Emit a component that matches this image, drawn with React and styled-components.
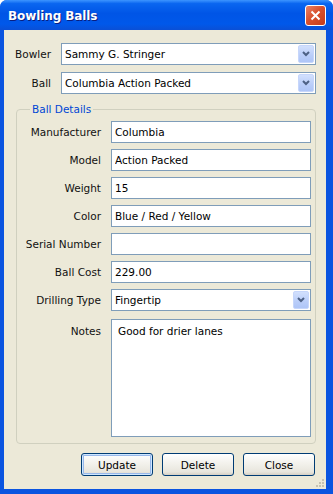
import { Fragment } from "react";
import styled, { createGlobalStyle } from "styled-components";

const GlobalStyle = createGlobalStyle`
  html, body {
    margin: 0;
    padding: 0;
    background: #ffffff;
  }
  body {
    font-family: "DejaVu Sans", Verdana, sans-serif;
    font-size: 10.5px;
  }
`;

const Window = styled.div`
  width: 333px;
  height: 494px;
  display: flex;
  flex-direction: column;
  background: #0a54e0;
  border-radius: 7px 7px 0 0;
  overflow: hidden;
  box-sizing: border-box;
`;

const TitleBar = styled.div`
  height: 30px;
  flex: none;
  display: flex;
  align-items: center;
  justify-content: space-between;
  padding: 0 7px 0 8px;
  background: linear-gradient(
    to bottom,
    #3d95ff 0%,
    #0a66f0 12%,
    #0055e6 45%,
    #0058ea 80%,
    #0a4fd6 100%
  );
`;

const Title = styled.span`
  color: #ffffff;
  font-weight: bold;
  font-size: 12px;
  letter-spacing: -0.1px;
  text-shadow: 1px 1px 0 #0a1e80;
  margin-top: 1px;
`;

const CloseButton = styled.div`
  width: 19px;
  height: 19px;
  border: 1px solid #ffffff;
  border-radius: 3px;
  background: linear-gradient(135deg, #e8836a 0%, #d9512e 45%, #c43b1a 100%);
  display: flex;
  align-items: center;
  justify-content: center;
  margin-top: 1px;
`;

const Client = styled.div`
  flex: 1;
  margin: 0 7px 5px 4px;
  background: #ece9d8;
  display: flex;
  flex-direction: column;
  position: relative;
`;

const TopGrid = styled.div`
  display: grid;
  grid-template-columns: 37px 1fr;
  column-gap: 10px;
  row-gap: 7px;
  padding: 13px 10px 0 10px;
  align-items: center;
`;

const Label = styled.label`
  text-align: right;
  color: #111;
  white-space: nowrap;
`;

const Combo = styled.div`
  height: 22px;
  box-sizing: border-box;
  border: 1px solid #7f9db9;
  background: #fff;
  display: flex;
  align-items: center;
  padding-left: 3px;
  color: #000;
`;

const ComboText = styled.span`
  flex: 1;
  white-space: nowrap;
  overflow: hidden;
`;

const ArrowButton = styled.div`
  width: 16px;
  height: 18px;
  margin-right: 1px;
  border-radius: 2px;
  background: linear-gradient(to bottom, #d2e0fd 0%, #b9cdf9 60%, #aec5f7 100%);
  border: 1px solid #c6d6fb;
  box-sizing: border-box;
  display: flex;
  align-items: center;
  justify-content: center;
`;

const Group = styled.fieldset`
  margin: 9px 10px 0 12px;
  padding: 5px 4px 6px 8px;
  border: 1px solid #d0d0bf;
  border-radius: 4px;
  min-width: 0;
`;

const Legend = styled.legend`
  color: #0046d5;
  padding: 0 2px;
  margin-left: 5px;
  line-height: 13px;
`;

const FieldGrid = styled.div`
  display: grid;
  grid-template-columns: 76px 1fr;
  column-gap: 10px;
  row-gap: 6px;
  align-items: center;
`;

const TextBox = styled.input`
  height: 22px;
  box-sizing: border-box;
  border: 1px solid #7f9db9;
  background: #fff;
  padding: 0 3px;
  margin: 0;
  font: inherit;
  color: #000;
  outline: none;
  width: 100%;
`;

const NotesLabel = styled(Label)`
  align-self: start;
  padding-top: 6px;
  margin-top: 2px;
`;

const Notes = styled.textarea`
  height: 118px;
  margin: 2px 0 0;
  box-sizing: border-box;
  border: 1px solid #7f9db9;
  background: #fff;
  padding: 5px 6px;
  font: inherit;
  color: #000;
  resize: none;
  outline: none;
  width: 100%;
  display: block;
`;

const ButtonRow = styled.div`
  display: flex;
  justify-content: flex-end;
  gap: 9px;
  padding: 9px 11px 0 0;
`;

const Button = styled.div`
  width: 72px;
  height: 23px;
  box-sizing: border-box;
  border: 1px solid #003c74;
  border-radius: 3px;
  background: linear-gradient(to bottom, #ffffff 0%, #f4f3ee 40%, #e8e6dd 85%, #d6d0c5 100%);
  display: flex;
  align-items: center;
  justify-content: center;
  color: #000;
  box-shadow: ${(p) =>
    p.$default ? "inset 0 0 0 1px #cee7ff, inset 0 0 0 2px #98b8ea" : "none"};
`;

const Grip = styled.svg`
  position: absolute;
  right: 1px;
  bottom: 1px;
`;

const Chevron = () => (
  <svg width="8" height="6" viewBox="0 0 8 6">
    <path d="M1 1 L4 4 L7 1" fill="none" stroke="#4d6185" strokeWidth="2" />
  </svg>
);

const Select = ({ value }) => (
  <Combo>
    <ComboText>{value}</ComboText>
    <ArrowButton>
      <Chevron />
    </ArrowButton>
  </Combo>
);

const fields = [
  ["Manufacturer", "Columbia"],
  ["Model", "Action Packed"],
  ["Weight", "15"],
  ["Color", "Blue / Red / Yellow"],
  ["Serial Number", ""],
  ["Ball Cost", "229.00"],
];

const gripDots = [
  [7, 1],
  [4, 4],
  [7, 4],
  [1, 7],
  [4, 7],
  [7, 7],
];

export default function App() {
  return (
    <>
      <GlobalStyle />
      <Window>
        <TitleBar>
          <Title>Bowling Balls</Title>
          <CloseButton>
            <svg width="11" height="11" viewBox="0 0 11 11">
              <path d="M1.5 1.5 L9.5 9.5 M9.5 1.5 L1.5 9.5" stroke="#fff" strokeWidth="2" />
            </svg>
          </CloseButton>
        </TitleBar>
        <Client>
          <TopGrid>
            <Label>Bowler</Label>
            <Select value="Sammy G. Stringer" />
            <Label>Ball</Label>
            <Select value="Columbia Action Packed" />
          </TopGrid>
          <Group>
            <Legend>Ball Details</Legend>
            <FieldGrid>
              {fields.map(([label, value]) => (
                <Fragment key={label}>
                  <Label>{label}</Label>
                  <TextBox readOnly value={value} />
                </Fragment>
              ))}
              <Label>Drilling Type</Label>
              <Select value="Fingertip" />
              <NotesLabel>Notes</NotesLabel>
              <Notes readOnly value="Good for drier lanes" />
            </FieldGrid>
          </Group>
          <ButtonRow>
            <Button $default>Update</Button>
            <Button>Delete</Button>
            <Button>Close</Button>
          </ButtonRow>
          <Grip width="10" height="10" viewBox="0 0 10 10">
            {gripDots.map(([x, y]) => (
              <rect key={x + "-" + y} x={x} y={y} width="2" height="2" fill="#c5c2b2" />
            ))}
          </Grip>
        </Client>
      </Window>
    </>
  );
}
